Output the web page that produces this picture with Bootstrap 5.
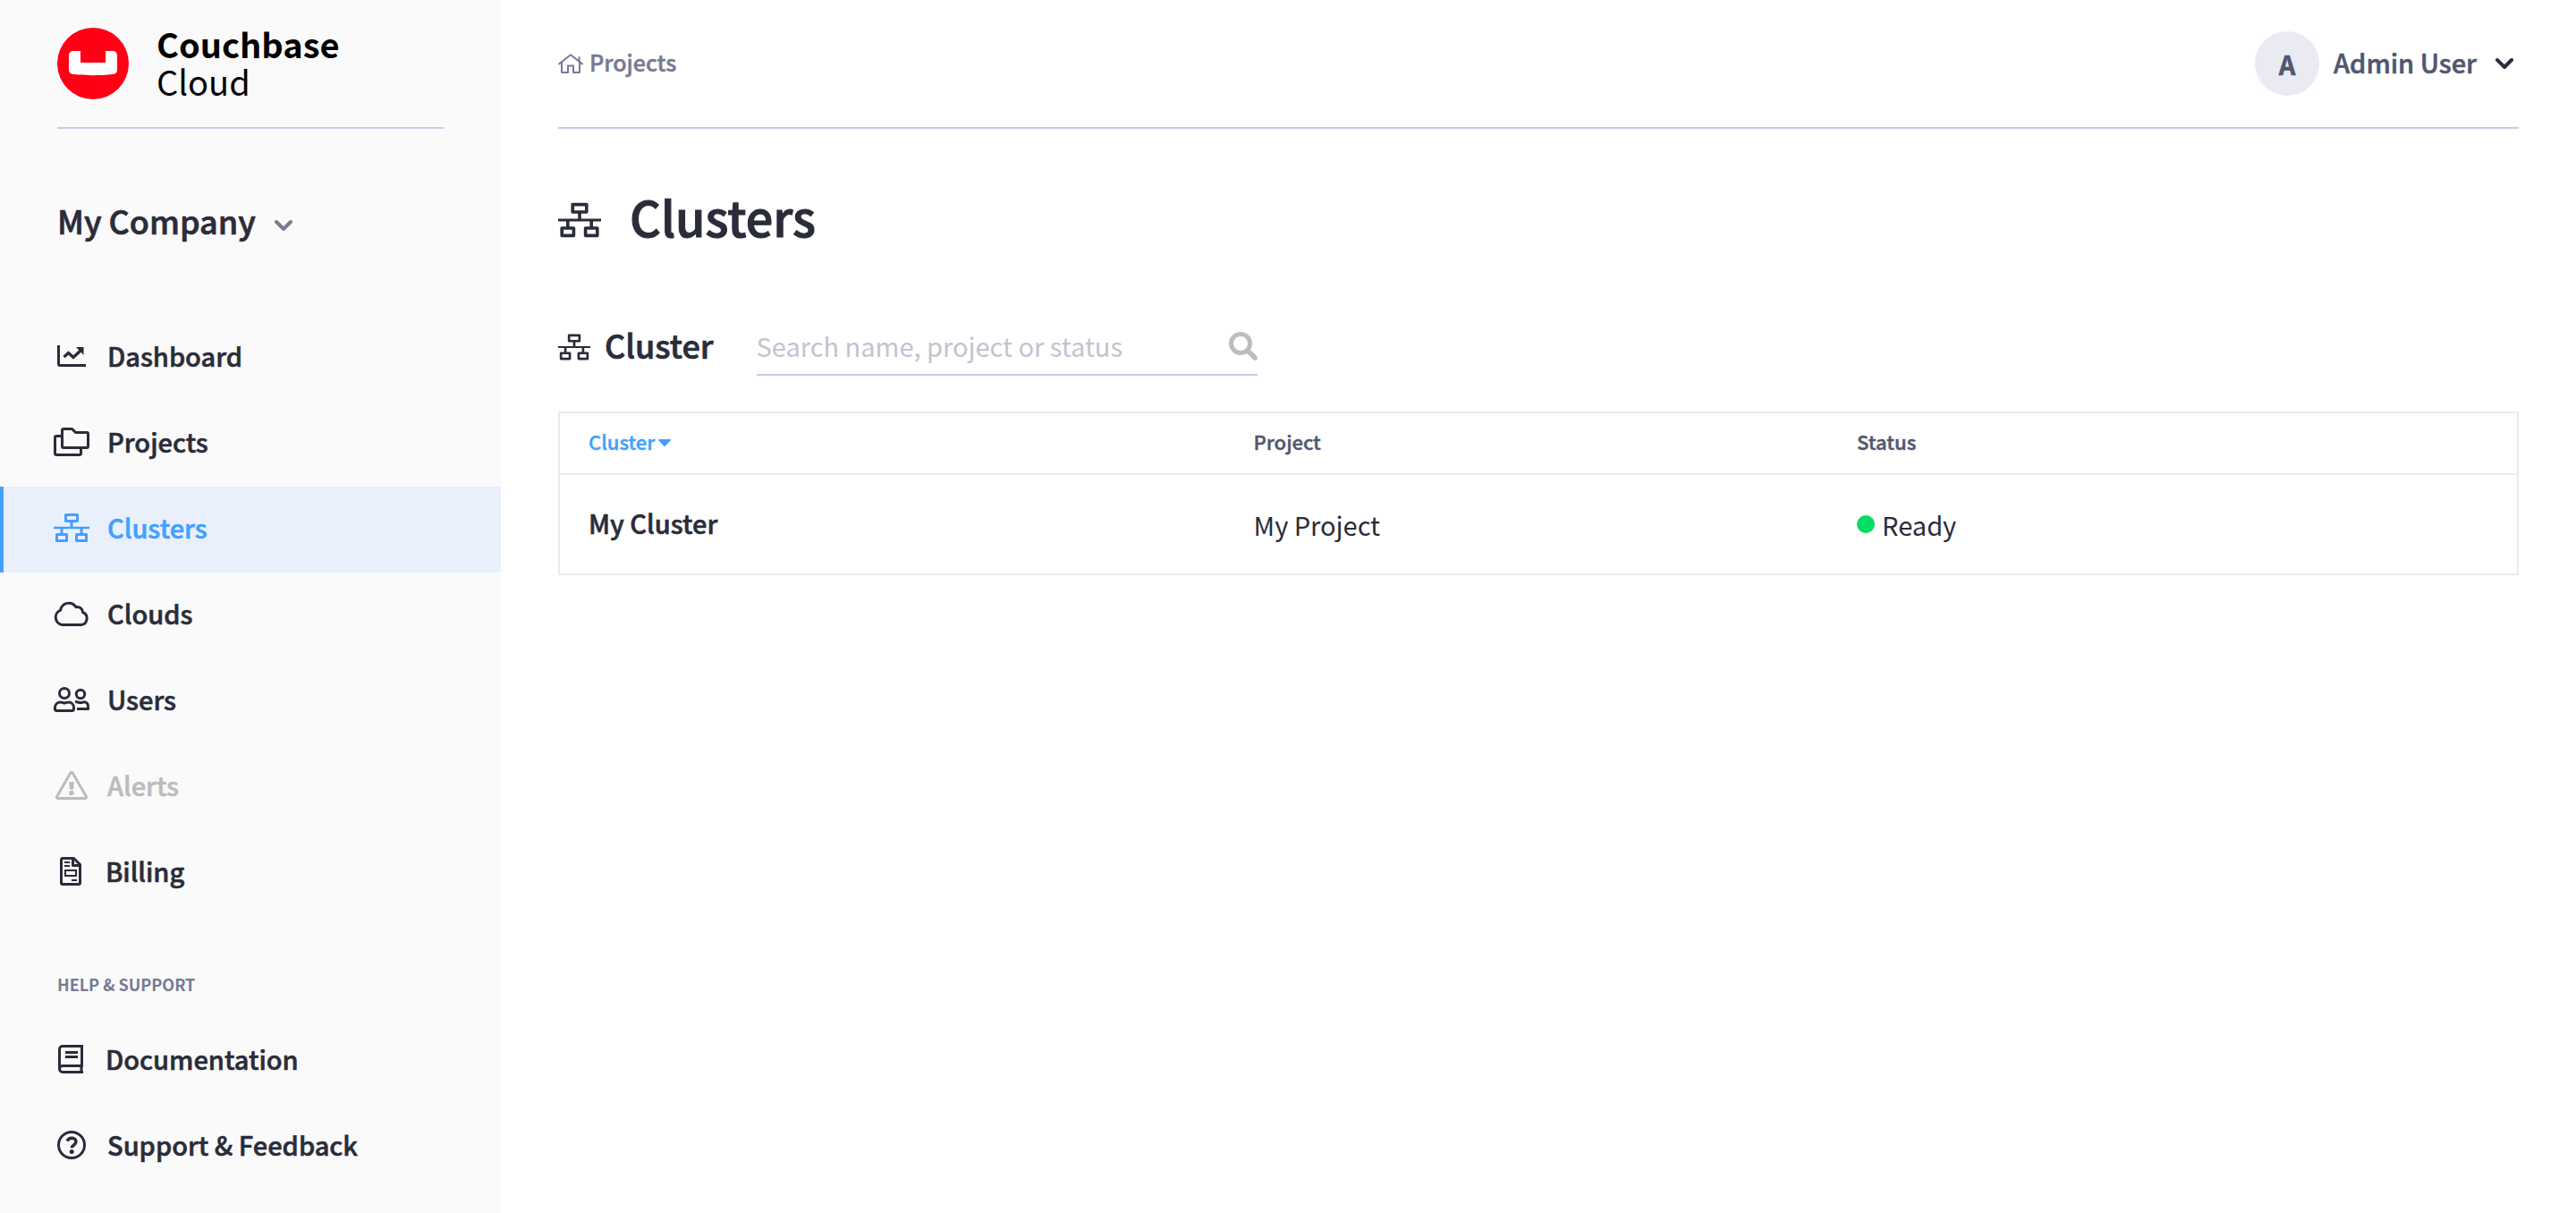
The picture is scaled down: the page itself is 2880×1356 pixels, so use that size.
<!DOCTYPE html>
<html lang="en">
<head>
<meta charset="utf-8">
<meta name="viewport" content="width=device-width, initial-scale=1">
<title>Clusters - Couchbase Cloud</title>
<link href="https://cdn.jsdelivr.net/npm/bootstrap@5.3.0/dist/css/bootstrap.min.css" rel="stylesheet">
<style>
  :root { --ink: #2a2c39; --slate: #515670; --muted: #777a94; --rule: #c9cae3; --line: #e9eaf2; --azure: #43a0ff; }
  body { font-family: "Noto Sans CJK SC", "Noto Sans", sans-serif; font-size: 29px; line-height: 40px; color: var(--ink); background: #fff; }
  svg { display: block; flex: none; }
  .stroke-icon { fill: none; stroke: currentColor; stroke-width: 3; stroke-linejoin: round; }
  .semi { font-weight: 500; -webkit-text-stroke: 0.02em currentColor; }
  .lift { padding-bottom: 4px; }
  .top-bar { height: 144px; border-bottom: 2px solid var(--rule); }
  .sidebar { width: 560px; background: #fafafa; }
  .sidebar .top-bar { margin: 0 64px; }
  .brand { color: #000; gap: 31px; font-size: 38px; line-height: 42px; }
  .brand-name { padding-bottom: 2px; }
  .org-btn { margin: 78px 64px 78px; font-size: 36px; line-height: 48px; color: var(--ink); gap: 20px; }
  .org-btn svg { color: var(--muted); margin-top: 8px; }
  .side-link { height: 96px; padding: 0 0 4px 56px; border-left: 4px solid transparent; gap: 20px; color: var(--ink); }
  .side-link > span:last-child { padding-bottom: 2px; }
  .side-link:hover { color: var(--azure); }
  .side-link.active { background: #e9f0fc; border-color: var(--azure); color: var(--azure); }
  .side-link.disabled { color: #bbbcbe; pointer-events: none; }
  .side-icon { width: 40px; flex: none; }
  .side-icon.slim { width: 38px; }
  .side-heading { margin: 64px 64px 26px; font-size: 18px; line-height: 24px; color: var(--muted); }
  .page-area { padding: 0 64px; min-width: 0; }
  .crumb { color: var(--muted); font-size: 25px; gap: 7px; }
  .user-btn { color: var(--slate); gap: 16px; font-size: 29px; line-height: 40px; }
  .avatar { width: 72px; height: 72px; background: var(--line); }
  .user-btn svg { color: var(--ink); margin: 0 5px 0 4px; }
  .page-title { margin: 62px 0 74px; gap: 32px; }
  .page-title svg { margin-top: 8px; }
  .page-title h1 { font-size: 54px; line-height: 72px; }
  .tools { gap: 48px; margin-bottom: 40px; }
  .tools h2 { font-size: 36px; line-height: 48px; gap: 16px; }
  .tools h2 svg { margin-top: 4px; }
  .tools h2 span { padding-bottom: 2px; }
  .search-box { width: 560px; height: 68px; padding-top: 2px; border-bottom: 2px solid var(--rule); }
  .search-box input { font-size: 29px; line-height: 40px; color: var(--ink); border: 0; outline: 0; background: none; min-width: 0; }
  .search-box input::placeholder { color: #c3c3cf; opacity: 1; }
  .search-box button { margin-top: 2px; }
  .cluster-table { table-layout: fixed; border: 2px solid var(--line); border-collapse: collapse; }
  .cluster-table th, .cluster-table td { padding: 0 32px; vertical-align: middle; border-bottom: 2px solid var(--line); }
  .cluster-table thead th { height: 69px; padding-bottom: 6px; font-size: 22px; line-height: 32px; color: var(--slate); }
  .cluster-table tbody > tr > * { height: 112px; }
  .cluster-table tbody th { padding-bottom: 4px; }
  .col-name { width: 34%; }
  .col-project { width: 30.8%; }
  .sort-btn { font-size: 22px; line-height: 32px; color: var(--azure); gap: 4px; }
  .state-dot { width: 20px; height: 20px; background: #00dc64; }
</style>
<script src="https://cdn.jsdelivr.net/npm/bootstrap@5.3.0/dist/js/bootstrap.bundle.min.js"></script>
</head>
<body>
<svg width="0" height="0" class="position-absolute" aria-hidden="true">
  <symbol id="cluster-glyph" viewBox="0 0 40 32">
    <g fill="none" stroke="currentColor" stroke-width="3" stroke-linejoin="round">
      <rect x="13.5" y="1.5" width="13" height="7"/>
      <rect x="3.5" y="23.5" width="11" height="7"/>
      <rect x="25.5" y="23.5" width="11" height="7"/>
      <path d="M20 9v7M9 16v7M31 16v7" />
      <path d="M0 16h40" stroke-width="2.4"/>
    </g>
  </symbol>
</svg>
<div class="d-flex min-vh-100">
  <aside class="sidebar flex-shrink-0">
    <div class="top-bar d-flex align-items-center">
      <a href="#" class="brand d-flex align-items-center text-decoration-none">
        <svg width="80" height="80" viewBox="0 0 80 80"><circle cx="40" cy="40" r="40" fill="#ff0014"/><path fill="#fff" d="M18 26h8v13h28V26h8c3 0 5 2 5 5v16c0 3-1.500 4.600-5 5-14 1.600-30 1.600-44 0-3.500-.4-5-2-5-5V31c0-3 2-5 5-5z"/></svg>
        <span class="brand-name"><span class="d-block fw-bold">Couchbase</span><span class="d-block">Cloud</span></span>
      </a>
    </div>
    <button type="button" class="org-btn btn border-0 p-0 d-flex align-items-center semi">
      <span class="lift">My Company</span>
      <svg class="stroke-icon" width="22" height="14" viewBox="0 0 22 14" stroke-linecap="round"><path style="stroke-width:4" d="M3 3l8 8 8-8"/></svg>
    </button>
    <nav aria-label="Main">
      <a href="#" class="side-link d-flex align-items-center text-decoration-none semi">
        <span class="side-icon"><svg class="mx-auto" width="32" height="24" viewBox="0 0 32 24"><path d="M1.500 0v21a1.500 1.500 0 0 0 1.500 1.500h29" fill="none" stroke="currentColor" stroke-width="3"/><path d="M7.500 13l5-4.500 5.500 5L26 6" fill="none" stroke="currentColor" stroke-width="3.400"/><path d="M21 2h8.500v9z" fill="currentColor"/></svg></span>
        <span>Dashboard</span></a>
      <a href="#" class="side-link d-flex align-items-center text-decoration-none semi">
        <span class="side-icon"><svg class="stroke-icon mx-auto" width="40" height="32" viewBox="0 0 40 32"><path d="M11 1.500h8.500c1 0 1.500.3 2 .9L24.500 5.500H37a1.500 1.500 0 0 1 1.500 1.500v14a1.500 1.500 0 0 1-1.500 1.500H11A1.500 1.500 0 0 1 9.500 21V3A1.500 1.500 0 0 1 11 1.500z"/><path d="M9 9.500H3A1.500 1.500 0 0 0 1.500 11v18A1.500 1.500 0 0 0 3 30.500h26a1.500 1.500 0 0 0 1.500-1.500v-6"/></svg></span>
        <span>Projects</span></a>
      <a href="#" class="side-link active d-flex align-items-center text-decoration-none semi" aria-current="page">
        <span class="side-icon"><svg width="40" height="32"><use href="#cluster-glyph"/></svg></span>
        <span>Clusters</span></a>
      <a href="#" class="side-link d-flex align-items-center text-decoration-none semi">
        <span class="side-icon"><svg class="stroke-icon mx-auto" width="40" height="28" viewBox="0 0 40 28"><path d="M10 26.500a8.500 8.500 0 0 1-2.300-16.400A9.400 9.400 0 0 1 25 6.700a6 6 0 0 1 7.500 5.800A7.300 7.300 0 0 1 31 26.500z"/></svg></span>
        <span>Clouds</span></a>
      <a href="#" class="side-link d-flex align-items-center text-decoration-none semi">
        <span class="side-icon"><svg class="stroke-icon mx-auto" width="40" height="28" viewBox="0 0 40 28"><circle cx="12" cy="7" r="5.500"/><circle cx="30" cy="8" r="4.700"/><path d="M3 26.500h18a1.500 1.500 0 0 0 1.500-1.500v-2c0-4-3-6-6-6-2 0-2.500.9-4.500.9S9.500 17 7.500 17c-3 0-6 2-6 6v2A1.500 1.500 0 0 0 3 26.500z"/><path d="M24 16.700c2-.5 3.500.9 6 .9 2 0 2.500-.9 4-.9 2.700 0 4.500 2 4.500 5v2.800H26"/></svg></span>
        <span>Users</span></a>
      <a href="#" class="side-link disabled d-flex align-items-center text-decoration-none semi" aria-disabled="true" tabindex="-1">
        <span class="side-icon"><svg class="mx-auto" width="36" height="32" viewBox="0 0 36 32"><path class="stroke-icon" d="M16.700 2.200a1.500 1.500 0 0 1 2.600 0l15 26a1.500 1.500 0 0 1-1.300 2.300H3a1.500 1.500 0 0 1-1.300-2.300z"/><path d="M15.300 12h5.400l-.6 8.500h-4.200z" fill="currentColor"/><circle cx="18" cy="24.500" r="2.700" fill="currentColor"/></svg></span>
        <span>Alerts</span></a>
      <a href="#" class="side-link d-flex align-items-center text-decoration-none semi">
        <span class="side-icon slim"><svg class="stroke-icon mx-auto" width="24" height="32" viewBox="0 0 24 32"><path d="M3 1.500h12.500l7 7V29a1.500 1.500 0 0 1-1.500 1.500H3A1.500 1.500 0 0 1 1.500 29V3A1.500 1.500 0 0 1 3 1.500z"/><path d="M14.500 2v7.500H22"/><g style="stroke-width:2;stroke-linejoin:miter"><path d="M5 6h6M5 10h6M13 26h6M6 15h12v6H6z"/></g></svg></span>
        <span>Billing</span></a>
    </nav>
    <h2 class="side-heading fw-bold text-uppercase">Help &amp; Support</h2>
    <nav aria-label="Help and support">
      <a href="#" class="side-link d-flex align-items-center text-decoration-none semi">
        <span class="side-icon slim"><svg class="stroke-icon mx-auto" width="28" height="32" viewBox="0 0 28 32"><path stroke-linejoin="miter" d="M28 30.500H5A3.500 3.500 0 0 1 1.500 27V5A3.500 3.500 0 0 1 5 1.500h21.500v22H5A3.500 3.500 0 0 0 1.500 27M26 23v8"/><path d="M8 8.500h14M8 13.500h14"/></svg></span>
        <span>Documentation</span></a>
      <a href="#" class="side-link d-flex align-items-center text-decoration-none semi">
        <span class="side-icon"><svg class="mx-auto" width="32" height="32" viewBox="0 0 32 32"><circle class="stroke-icon" cx="16" cy="16" r="14.500"/><path d="M11 11.500c1.500-2.500 3-3.200 5.200-3.200 2.800 0 4.800 1.700 4.800 4 0 3.700-4.700 3.700-4.700 7" fill="none" stroke="currentColor" stroke-width="3.500"/><circle cx="16.200" cy="23.500" r="2.500" fill="currentColor"/></svg></span>
        <span>Support &amp; Feedback</span></a>
    </nav>
  </aside>

  <main class="page-area flex-grow-1">
    <header class="top-bar d-flex align-items-center justify-content-between">
      <a href="#" class="crumb d-flex align-items-center text-decoration-none semi">
        <svg width="28" height="22" viewBox="0 0 28 22" fill="none" stroke="currentColor" stroke-width="2" stroke-linecap="round" stroke-linejoin="round"><path d="M1 11.500L14 1.200l13 10.300M23.500 4v4"/><path d="M4 9.500V21h7v-7.500h6V21h7V9.500"/></svg>
        <span class="lift">Projects</span></a>
      <button type="button" class="user-btn btn border-0 p-0 d-flex align-items-center semi">
        <span class="avatar rounded-circle d-flex align-items-center justify-content-center fw-bold">A</span>
        <span class="lift">Admin User</span>
        <svg class="stroke-icon" width="22" height="14" viewBox="0 0 22 14" stroke-linecap="round"><path style="stroke-width:4" d="M3 3l8 8 8-8"/></svg>
      </button>
    </header>

    <div class="page-title d-flex align-items-center">
      <svg width="48" height="40" viewBox="0 0 48 40"><use href="#cluster-glyph" width="48" height="40"/></svg>
      <h1 class="m-0 semi">Clusters</h1>
    </div>

    <div class="tools d-flex align-items-center">
      <h2 class="m-0 d-flex align-items-center semi">
        <svg width="36" height="30" viewBox="0 0 36 30"><use href="#cluster-glyph" width="36" height="30"/></svg>
        <span>Cluster</span></h2>
      <form class="search-box d-flex align-items-center">
        <input type="search" class="flex-grow-1 p-0" aria-label="Search clusters" placeholder="Search name, project or status">
        <button type="submit" class="btn border-0 p-0" aria-label="Search">
          <svg width="32" height="32" viewBox="0 0 32 32" fill="none" stroke="#bdbdbd" stroke-linecap="round"><circle cx="13" cy="13" r="10.500" stroke-width="5"/><path d="M21.500 21.500l7.500 7.500" stroke-width="5.500"/></svg>
        </button>
      </form>
    </div>

    <table class="cluster-table w-100">
      <thead>
        <tr>
          <th scope="col" class="col-name semi" aria-sort="descending"><button type="button" class="sort-btn btn border-0 p-0 d-flex align-items-center semi">Cluster <svg class="mt-1" width="14" height="8" viewBox="0 0 14 8"><path d="M1 0h12c1 0 1.200.8.6 1.400L8 7.500c-.6.6-1.400.6-2 0L.4 1.400C-.2.8 0 0 1 0z" fill="currentColor"/></svg></button></th>
          <th scope="col" class="col-project semi">Project</th>
          <th scope="col" class="semi">Status</th>
        </tr>
      </thead>
      <tbody>
        <tr>
          <th scope="row" class="semi">My Cluster</th>
          <td>My Project</td>
          <td><span class="d-flex align-items-center gap-2"><span class="state-dot rounded-circle"></span>Ready</span></td>
        </tr>
      </tbody>
    </table>
  </main>
</div>
</body>
</html>
